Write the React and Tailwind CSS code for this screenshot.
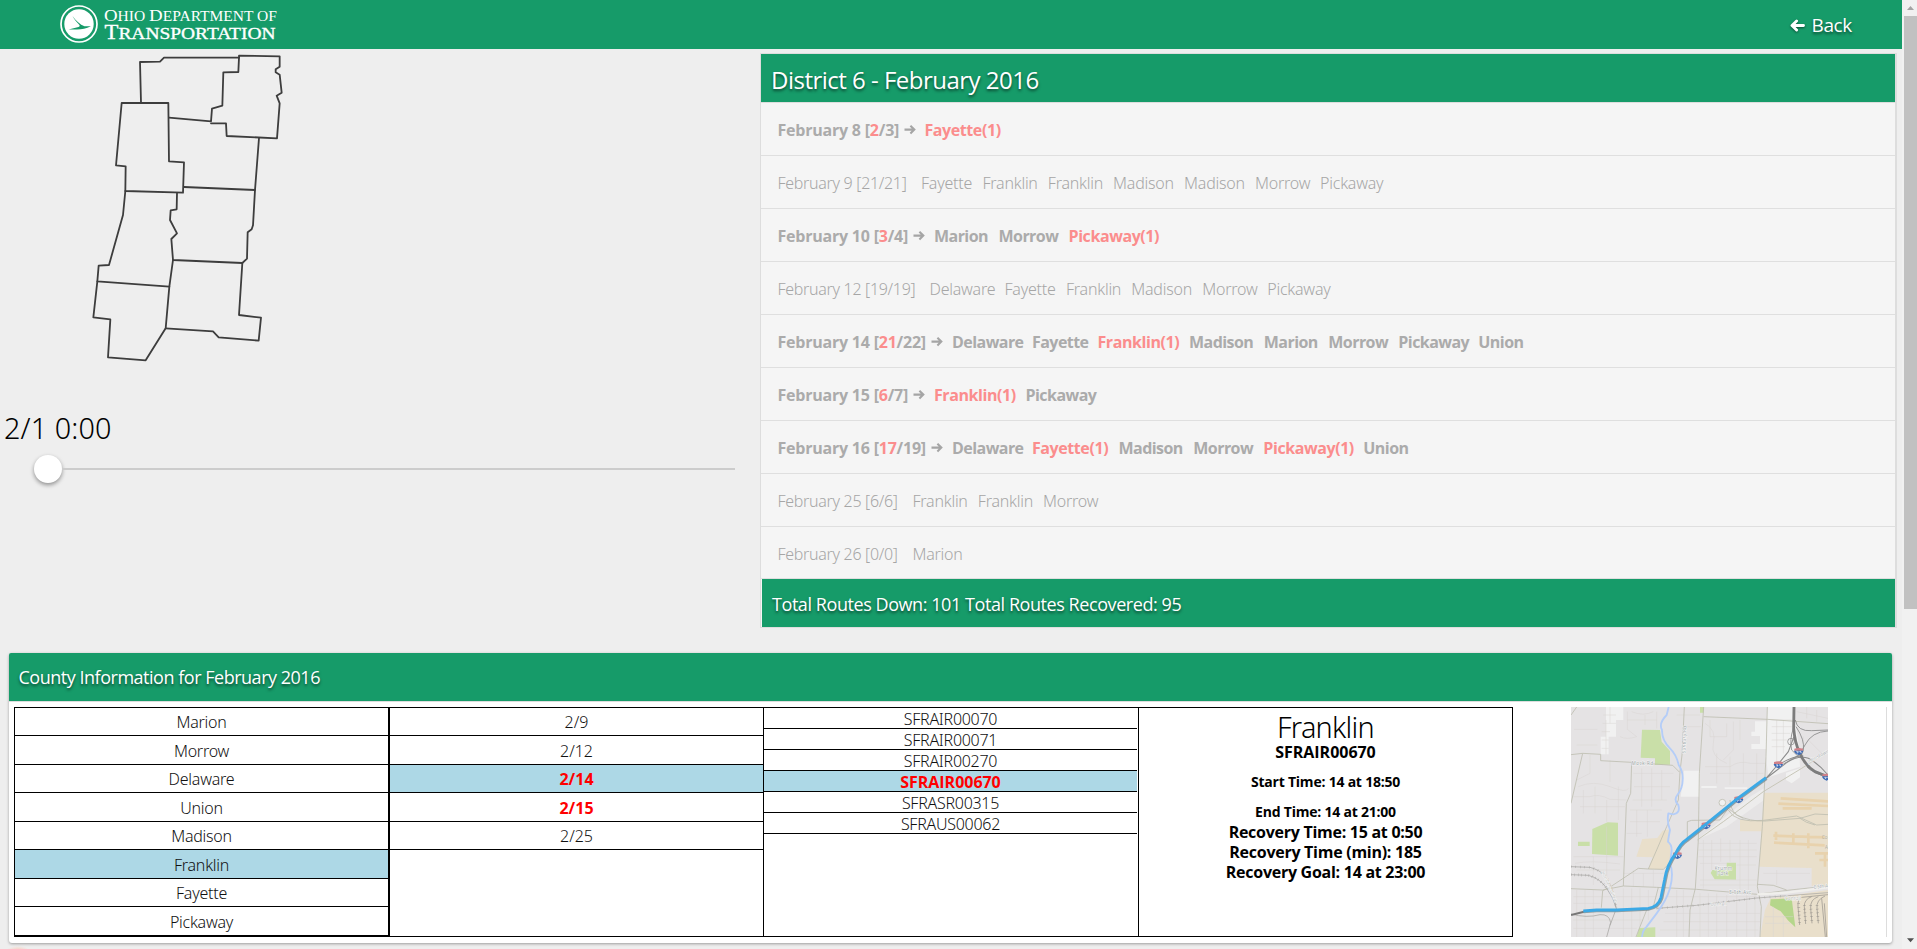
import React from 'react';

const days = [
  { label: 'February 8', down: '2', total: '3', alert: true, w: 'w-[147px]', names: ['Fayette(1)'] },
  { label: 'February 9', down: '21', total: '21', w: 'w-[143.5px]', names: ['Fayette', 'Franklin', 'Franklin', 'Madison', 'Madison', 'Morrow', 'Pickaway'] },
  { label: 'February 10', down: '3', total: '4', alert: true, w: 'w-[156.5px]', names: ['Marion', 'Morrow', 'Pickaway(1)'] },
  { label: 'February 12', down: '19', total: '19', w: 'w-[152px]', names: ['Delaware', 'Fayette', 'Franklin', 'Madison', 'Morrow', 'Pickaway'] },
  { label: 'February 14', down: '21', total: '22', alert: true, w: 'w-[174.5px]', names: ['Delaware', 'Fayette', 'Franklin(1)', 'Madison', 'Marion', 'Morrow', 'Pickaway', 'Union'] },
  { label: 'February 15', down: '6', total: '7', alert: true, w: 'w-[156.5px]', names: ['Franklin(1)', 'Pickaway'] },
  { label: 'February 16', down: '17', total: '19', alert: true, w: 'w-[174.5px]', names: ['Delaware', 'Fayette(1)', 'Madison', 'Morrow', 'Pickaway(1)', 'Union'] },
  { label: 'February 25', down: '6', total: '6', w: 'w-[135px]', names: ['Franklin', 'Franklin', 'Morrow'] },
  { label: 'February 26', down: '0', total: '0', w: 'w-[135px]', names: ['Marion'] },
];

const lightWidths = {
  Fayette: 'w-[61.5px]', Franklin: 'w-[65.3px]', Madison: 'w-[71px]', Morrow: 'w-[65px]',
  Delaware: 'w-[75px]', Pickaway: 'w-[75px]', Marion: 'w-[60px]',
};
const boldWidths = {
  Fayette: 'w-[65.5px]', 'Fayette(1)': 'w-[86.5px]', 'Franklin(1)': 'w-[91.5px]', Madison: 'w-[74.8px]',
  Morrow: 'w-[70px]', Delaware: 'w-[80px]', Pickaway: 'w-[80px]', Marion: 'w-[64.5px]',
  'Pickaway(1)': 'w-[100px]', Union: 'w-[60px]',
};

const counties = ['Marion', 'Morrow', 'Delaware', 'Union', 'Madison', 'Franklin', 'Fayette', 'Pickaway'];
const dates = ['2/9', '2/12', '2/14', '2/15', '2/25'];
const routes = ['SFRAIR00070', 'SFRAIR00071', 'SFRAIR00270', 'SFRAIR00670', 'SFRASR00315', 'SFRAUS00062'];

const Logo = () => (
  <svg className="ml-[60px] h-[49px] w-[220px]" viewBox="0 0 220 49" fill="none">
    <circle cx="19" cy="24" r="18" stroke="#fff" strokeWidth="1.7" />
    <circle cx="19" cy="24" r="14.7" fill="#fff" />
    <path d="M12.5 16 C16 21 20 24.5 24.5 26.3 L31 26.3 C26 28.5 22 29.6 17 29.6 L8.5 29.4 L18.5 27 C20 26.5 20 25.7 19 24.6 C16.5 22 14 19 12.5 16Z" fill="#169b69" />
    <g fill="#fff" fontFamily="'Liberation Serif', serif">
      <text x="44" y="21.3" fontSize="17" textLength="173" lengthAdjust="spacingAndGlyphs">O<tspan fontSize="14">HIO </tspan>D<tspan fontSize="14">EPARTMENT OF</tspan></text>
      <text x="44.5" y="39" fontSize="20.5" textLength="171" lengthAdjust="spacingAndGlyphs" stroke="#fff" strokeWidth="0.35">T<tspan fontSize="17.5">RANSPORTATION</tspan></text>
    </g>
  </svg>
);

const BackArrow = () => (
  <svg className="h-[13px] w-[15px] drop-shadow-[0_1px_1px_rgba(0,0,0,0.5)]" viewBox="0 0 15 13" fill="none" stroke="#fff" strokeWidth="2.9" strokeLinecap="round" strokeLinejoin="round">
    <path d="M13.5 6.5 H2.5 M6.6 2 L2 6.5 L6.6 11" />
  </svg>
);

const DistrictMap = () => (
  <svg className="ml-[80px] h-[321px] w-[220px] shrink-0" viewBox="0 27 660 963" fill="none" stroke="#3d3d3d" strokeWidth="5.4" strokeLinejoin="round" strokeLinecap="round">
    <path d="M183 188 L180 66 L240 65 L252 53 L477 53 L475 96 L430 97 L427 197 L396 206 L393 244 L267 233" />
    <path d="M477 53 V47 L599 49 V80 L587 88 V97 L599 104 L605 158 L590 167 L599 190 L591 295 L440 288 L438 250 H393" />
    <path d="M125 189 H265 L267 364 L312 367 L309 458 L136 453 L137 379 L108 376 Z" />
    <path d="M537 294 L525 450 L312 441" />
    <path d="M136 453 L129 525 L87 675 L56 677 L52 724 L268 740" />
    <path d="M291 460 L290 508 L272 511 L270 540 L291 580 L274 597 L279 660 L487 669 L501 656 L503 577 L515 568 L519 556 L525 450" />
    <path d="M52 724 L40 832 L91 838 L84 952 L197 961 L257 865 L268 740 L279 660" />
    <path d="M487 669 L477 825 L543 833 L536 902 L416 892 L399 874 L257 865" />
  </svg>
);

const Shield = ({ x, y }) => (
  <g>
    <path d={`M${x - 13} ${y - 8} Q${x} ${y - 12} ${x + 13} ${y - 8} V${y - 2} H${x - 13}Z`} fill="#d08088" />
    <path d={`M${x - 14} ${y - 2} H${x + 14} Q${x + 13} ${y + 6} ${x} ${y + 11} Q${x - 13} ${y + 6} ${x - 14} ${y - 2}Z`} fill="#3f6cb5" />
    <path d={`M${x - 7} ${y + 1} H${x - 1} L${x - 4} ${y + 6} M${x + 2} ${y + 1} H${x + 7} V${y + 5}`} stroke="#fff" strokeWidth="2.2" fill="none" />
  </g>
);

const RoadMap = () => (
  <svg className="h-[230px] w-[257px]" viewBox="183 201 771 690" fill="none">
    <rect x="183" y="201" width="771" height="690" fill="#e5e3e4" />
    <g fill="#f1f1f1">
      <path d="M288 201 H340 V240 H318 V290 H296 V343 H272 V290 H288Z" />
      <path d="M772 201 H850 L868 330 L870 380 L775 412 L768 350Z" />
      <path d="M735 244 H770 V327 H724 V312 H750 V288 H724 V275 H735Z" />
      <path d="M522 392 H568 V470 H512Z" />
      <path d="M574 438 H620 V444 H574Z M644 442 H712 V447 H644Z" />
      <path d="M828 398 L870 385 V412 L845 430 L828 420Z" />
      <path d="M720 470 L762 445 V480 L650 560 L560 600 L640 535Z" fillOpacity=".6" />
    </g>
    <g fill="#e9dfcb">
      <path d="M762 458 H954 V740 L905 738 V684 L748 680 L754 574 H690 V540 H757Z" />
      <path d="M782 775 L954 750 V891 H750 L765 810Z" />
      <path d="M458 572 L476 568 L484 670 L458 688 L415 687 L428 652 L379 650 L397 597 L442 594Z" />
    </g>
    <g fill="#c9dfa8">
      <path d="M396 269 L450 270 L455 305 L480 333 V374 L435 375 V355 L392 353Z" />
      <path d="M293 547 L324 548 V647 L246 642 L247 567Z" />
      <path d="M204 605 H239 V618 H204Z M570 201 H581 V218 H570Z" />
      <path d="M650 668 H678 V719 L614 718 L602 699 L607 690 L650 690Z" />
      <path d="M388 864 L436 862 V891 H380Z" />
      <path d="M782 778 L845 775 L856 862 L835 842 L812 814 L780 796Z" fill="#b5d68b" />
    </g>
    <g stroke="#d8d5d3" strokeWidth="1.5">
      <path d="M280 225 H318 M278 250 H318 M275 275 H300 M275 300 H296 M275 325 H296 M300 201 V250 M288 343 V240" />
      <path d="M352 215 V268 L380 290 M352 240 H440 M365 215 Q400 230 430 215 M405 225 V255 M440 215 V265 M330 290 Q350 300 380 290" />
      <path d="M192 268 H262 M200 315 H262 M240 345 V400 L200 420 M300 360 V425 M205 440 Q250 420 300 440 T355 445 M190 470 H240 Q265 460 300 478 L350 480 M220 450 V520 M255 440 V520 M210 500 H345 M290 480 V545 M325 440 V540" />
      <path d="M370 400 H490 M372 440 H480 M368 480 H470 M360 510 H455 M395 385 V500 M425 385 V500 M455 390 V480 M360 545 H450 M350 580 H395 M380 510 V590 M412 510 V590" />
      <path d="M500 225 H570 M525 260 H572 M585 250 Q620 270 610 310 T650 370 M600 240 V290 H650 V250 M670 245 V330 L640 360 M690 240 V300 M585 380 H660 Q690 360 720 370 H768 M600 400 H760 M620 340 V430 M660 350 V435 M700 340 V430 M740 340 V430" />
      <path d="M785 240 H845 M785 260 H845 M785 280 H840 M785 300 H830 M785 320 H825 M800 240 V370 M820 240 V340 M860 215 L954 235 M890 201 V235 M920 210 V245 M895 300 L940 345 M880 290 V340" />
      <path d="M190 650 H340 M195 670 Q240 660 330 672 M290 560 V735 M250 650 V735 M200 690 H330 M340 700 H460 M370 690 V740 M400 700 V740 M430 690 V740" />
      <path d="M565 610 H740 M565 630 H740 M565 650 H740 M570 670 H650 M680 675 H738 M580 600 V745 M605 600 V690 M632 595 V665 M660 600 V665 M690 600 V750 M715 600 V750 M570 720 H740 M570 735 H740" />
      <path d="M190 770 H440 M190 790 H270 M200 750 V891 M225 750 V891 M250 750 V891 M340 745 V891 M365 745 V891 M390 745 V860 M190 840 H400 M190 865 H380 M415 750 V840" />
      <path d="M470 770 H740 M465 820 H750 M460 845 H750 M450 870 H745 M500 750 V891 M520 750 V891 M570 760 V891 M595 760 V891 M620 760 V891 M650 765 V891 M680 765 V891 M710 760 V891 M735 760 V891" />
      <path d="M765 830 H850 M765 850 H840 M790 800 V891 M820 830 V891 M760 700 H900 M800 690 V735" />
    </g>
    <g stroke="#e8d2ad" strokeWidth="11">
      <path d="M812 475 L954 484 M805 491 L954 498 M818 505 H905" strokeWidth="8" />
      <path d="M790 587 L944 592 M792 608 L944 616 M915 640 H954 M928 660 H954 M798 575 V600 M850 580 V610 M895 580 V625 M945 640 V680" strokeWidth="8" />
    </g>
    <g stroke="#bdbcae" strokeWidth="2.4">
      <path d="M200 201 L183 225 M183 344 L218 340 L272 343 V362 L365 367 L488 376 L508 396 M218 340 L183 490" />
      <path d="M365 367 L362 460 L349 490 L340 738 M523 201 L516 345 L510 395 L505 480 L470 560 L440 630 L415 687 L385 685 L305 738 L278 752 L274 803" />
      <path d="M581 201 L568 400 L565 600 L556 745 L540 810 L537 891 M581 230 L772 238 L954 251 M772 201 L768 350 L757 560 L742 740 L754 800 L750 891" />
      <path d="M183 746 L278 750 L340 738 L440 742 L560 748 L742 763 L840 750 L954 738 M742 733 L790 736 L830 750 M445 742 L430 800 L410 810 L390 860 L378 891" />
      <path d="M415 687 L460 688 L500 650 M532 600 V545 L545 541 L630 540 L655 505 L680 525 Q720 545 765 543 L870 535 L915 522 L954 524 M655 510 Q675 550 760 541 L860 528 L920 555 L954 553 M870 535 Q885 548 915 555 M660 480 Q660 520 700 535" />
      <circle cx="637" cy="488" r="10" fill="#f1f1f1" />
      <path d="M562 600 L640 545 L760 455 L875 385 L954 335" stroke="#c7c6b8" strokeWidth="3" />
    </g>
    <path d="M742 763 L830 758 L954 742" stroke="#f0efec" strokeWidth="7" />
    <path d="M440 805 L560 796 L740 774 L820 768 L954 758" stroke="#aaa9a5" strokeWidth="2.2" />
    <path d="M440 805 L560 796 L740 774 L820 768" stroke="#aaa9a5" strokeWidth="7" strokeDasharray="1.5 14" />
    <g stroke="#a9a8a6" strokeWidth="2.4">
      <path d="M183 680 L240 682 Q270 690 285 708 Q310 740 318 803 M183 704 L235 706 Q270 715 290 745 Q312 775 318 803" />
      <path d="M183 822 Q230 835 270 824 Q298 822 302 848 L290 891 M320 803 L300 856" />
      <path d="M183 680 L240 682 Q270 690 285 708 Q310 740 318 803" strokeWidth="7" strokeDasharray="1.5 12" />
      <path d="M183 704 L235 706 Q270 715 290 745" strokeWidth="8" strokeDasharray="1.5 9" />
    </g>
    <g stroke="#94908a" strokeWidth="2">
      <path d="M954 764 L875 772 Q862 778 864 800 L869 855 M905 770 Q882 778 883 800 L887 852 M925 770 Q900 778 902 805 L906 850 M945 768 Q918 780 921 805 L925 850 M935 775 L946 891 M943 790 L950 891" />
      <path d="M866 790 L869 855 M883 795 L887 852 M902 795 L906 850 M921 795 L925 850" strokeWidth="8" strokeDasharray="1.5 10" />
    </g>
    <path d="M476 201 L470 225 Q445 250 456 270 Q455 300 480 325 Q500 345 506 375 Q520 395 518 420 Q518 445 502 465 Q490 480 505 495 Q512 520 490 523 L475 520 Q470 545 480 570 Q475 595 474 605 Q488 615 484 640 L480 670 Q492 700 480 745 Q470 780 440 820 L410 860 Q398 870 396 891" stroke="#b4cdf8" strokeWidth="5.5" strokeLinejoin="round" />
    <g stroke="#8b8b8b" strokeWidth="3.2">
      <path d="M768 415 L800 378 L835 335 L852 290 M770 414 L830 368 Q865 345 895 355 Q925 370 954 405 M800 378 Q850 345 880 348" />
      <path d="M856 240 Q862 275 905 272 L954 270 M954 273 Q905 275 885 315 L868 345 L820 372 M850 265 Q838 300 845 330 L865 350 M858 260 Q885 300 880 330 L872 352 M890 380 Q905 398 954 412" strokeWidth="2.6" />
      <circle cx="843" cy="305" r="10" strokeWidth="2.2" />
    </g>
    <path d="M852 201 L851 265 Q855 310 868 335 Q880 372 915 395 L954 410" stroke="#7c7c7c" strokeWidth="8.5" />
    <path d="M183 825 L222 815" stroke="#777" strokeWidth="6" />
    <path d="M220 816 L260 813 L320 813 L415 808 Q448 802 456 775 L467 720 Q474 675 500 642 Q515 612 532 602 L590 556 L680 482 L770 416" stroke="#7d8d91" strokeWidth="8" strokeOpacity=".8" />
    <Shield x={502} y={646} />
    <Shield x={588} y={557} />
    <Shield x={686} y={479} />
    <Shield x={805} y={374} />
    <Shield x={866} y={334} />
    <Shield x={950} y={411} />
    <path d="M220 813 L260 810 L320 810 L415 805 Q445 800 453 772 L464 718 Q471 673 497 640 Q512 609 529 599 L587 553 L677 480 L768 413" stroke="#3ca9e6" strokeWidth="8.5" strokeLinejoin="round" />
    <g fill="#5e6f72" stroke="#f3f3f3" strokeWidth="3" paintOrder="stroke" fontFamily="'Open Sans', sans-serif" fontSize="13.5">
      <text x="365" y="376" textLength="64">Mock-Rd</text>
      <text x="526" y="340" textLength="82" transform="rotate(-88 526 340)">Sunbury-Rd</text>
      <text x="614" y="690" textLength="52">Krumm</text>
      <text x="622" y="704" textLength="32">Park</text>
      <text x="658" y="763" textLength="66">E 5th-Ave</text>
      <text x="602" y="798" textLength="48" fill="#99a0a0" transform="rotate(-3 602 798)">Conrail</text>
      <text x="825" y="779" textLength="48" fill="#99a0a0">Conrail</text>
      <text x="912" y="746" textLength="42" transform="rotate(-6 912 746)">E 5th A</text>
      <text x="896" y="370" textLength="70" fill="#7d8789" transform="rotate(-29 896 370)">Johnstown</text>
      <text x="275" y="697" textLength="100" fill="#99a0a0" fontSize="11" transform="rotate(66 275 697)">Norfolk Southern</text>
      <text x="936" y="596" fill="#8d9696" stroke="none">Co</text>
      <text x="945" y="627" fill="#8d9696" stroke="none">A</text>
    </g>
  </svg>
);

const DayRow = ({ day, last }) => {
  const bold = day.alert;
  return (
    <li className={`flex h-[53px] shrink-0 items-center border-[#dfdfdf] pt-px pl-[16.5px] text-base leading-none whitespace-nowrap ${last ? 'border-b-0' : 'border-b'} ${bold ? 'font-bold text-[#ababab]' : "font-['Noto_Sans',sans-serif] font-light text-[#a6a6a6]"}`}>
      <span className={`flex shrink-0 items-center ${day.w} ${bold ? 'tracking-[-0.22px]' : 'tracking-[-0.31px]'}`}>
        <span>{day.label} [{bold ? <span className="text-[#fb8d8d]">{day.down}</span> : day.down}/{day.total}]</span>
        {bold && (
          <svg className="ml-[5px] h-[10px] w-[12px]" viewBox="0 0 12 10" fill="none" stroke="#a5a5a5" strokeWidth="2.1">
            <path d="M0.5 4.6 H10 M6.4 0.8 L10.3 4.6 L6.4 8.4" />
          </svg>
        )}
      </span>
      {day.names.map((name, i) => (
        <span key={i} className={`shrink-0 ${bold ? boldWidths[name] : lightWidths[name]} ${name.includes('(') ? 'tracking-[-0.42px] text-[#fb8d8d]' : bold ? 'tracking-[-0.55px]' : 'tracking-[-0.24px]'}`}>{name}</span>
      ))}
    </li>
  );
};

const Scrollbar = () => (
  <div className="flex w-[15px] shrink-0 flex-col items-end bg-[#f1f1f1]">
    <svg className="h-4 w-[13px] shrink-0" viewBox="0 0 13 16"><path d="M3 10 L6.5 6 L10 10Z" fill="#a3a3a3" /></svg>
    <div className="h-[593px] w-[13px] shrink-0 bg-[#c1c1c1]" />
    <svg className="mt-auto h-[17px] w-[13px] shrink-0" viewBox="0 0 13 17"><path d="M3 6.3 H10 L6.5 10.3Z" fill="#505050" /></svg>
  </div>
);

const shadowText = 'text-white [text-shadow:0_2px_3px_rgba(0,0,0,0.55)]';

export default function App() {
  return (
    <div className="flex h-[949px] w-[1917px] overflow-hidden bg-[#eeeeee] font-['Open_Sans',sans-serif] text-black">
      <div className="flex w-[1902px] shrink-0 flex-col">
        <header className="flex h-[49px] shrink-0 items-center justify-between bg-[#169b69] pr-[50px]">
          <Logo />
          <a className={`flex items-center gap-[6px] pt-px text-[19px] leading-none tracking-[-0.35px] ${shadowText}`}>
            <BackArrow />
            <span>Back</span>
          </a>
        </header>

        <main className="flex h-[604px] shrink-0">
          <section className="flex w-[760px] shrink-0 flex-col">
            <DistrictMap />
            <div className="mt-[38px] h-[40px] pl-[4px] font-['Noto_Sans',sans-serif] text-[28.8px] leading-[40px] font-light tracking-[0.1px]">2/1 0:00</div>
            <div className="mt-[7px] flex h-[28px] items-center pl-[34px]">
              <div className="size-[28px] shrink-0 rounded-full bg-white shadow-[0_2px_4px_rgba(0,0,0,0.4)]" />
              <div className="h-[2px] w-[673px] bg-[#cccccc]" />
            </div>
          </section>

          <section className="mt-[4px] flex h-[575px] w-[1137px] flex-col border-t border-r-2 border-b border-l border-[#dddddd] bg-[#f5f5f5]">
            <h1 className={`flex h-[49px] shrink-0 items-center border-b border-[#dddddd] bg-[#169b69] pt-[4px] pl-[10px] text-2xl leading-none font-normal tracking-[-0.51px] ${shadowText}`}>District 6 - February 2016</h1>
            <ul className="flex h-[476px] shrink-0 flex-col overflow-hidden border-b border-[#dfdfdf]">
              {days.map((day, i) => <DayRow key={day.label} day={day} last={i === days.length - 1} />)}
            </ul>
            <div className={`ml-px flex flex-1 items-center bg-[#169b69] pt-[2px] pl-[10px] text-lg leading-none tracking-[-0.43px] ${shadowText}`}>Total Routes Down: 101 Total Routes Recovered: 95</div>
          </section>
        </main>

        <section className="ml-[9px] h-[290px] w-[1883px] shrink-0 rounded-[3px] bg-white shadow-[0_1px_3px_rgba(0,0,0,0.35)]">
          <h2 className={`flex h-[49px] items-center rounded-t-[2px] border-b border-[#dddddd] bg-[#169b69] pl-[9.5px] text-lg leading-none font-normal tracking-[-0.48px] ${shadowText}`}>County Information for February 2016</h2>
          <div className="flex h-[235px] pt-[5px] pl-[5px] text-center font-['Noto_Sans',sans-serif] text-base leading-none font-light text-[#111111]">
            <div className="h-[230px] w-[375px] border border-black">
              {counties.map((name) => (
                <div key={name} className={`flex h-[28px] items-center justify-center border-b border-black pt-px tracking-[-0.24px] even:h-[29px] ${name === 'Franklin' ? 'bg-[#add8e6]' : ''}`}>{name}</div>
              ))}
            </div>
            <div className="h-[230px] w-[375px] border border-black">
              {dates.map((date) => (
                <div key={date} className={`flex h-[28px] items-center justify-center border-b border-black pt-px even:h-[29px] ${date === '2/14' ? 'bg-[#add8e6]' : ''} ${date === '2/14' || date === '2/15' ? "font-['Open_Sans',sans-serif] font-bold text-[#ff0000]" : ''}`}>{date}</div>
              ))}
            </div>
            <div className="h-[230px] w-[374px] border-y border-black pr-px">
              {routes.map((route) => (
                <div key={route} className={`flex h-[21px] items-center justify-center border-b border-black pt-px ${route === 'SFRAIR00670' ? "bg-[#add8e6] font-['Open_Sans',sans-serif] font-bold tracking-[-0.03px] text-[#ff0000]" : 'tracking-[-0.27px]'}`}>{route}</div>
              ))}
            </div>
            <div className="flex h-[230px] w-[375px] flex-col items-center border border-black pt-[4px] font-['Open_Sans',sans-serif] font-bold text-black">
              <div className="h-[30px] font-['Noto_Sans',sans-serif] text-[28.8px] leading-[30px] font-light tracking-[-0.72px]">Franklin</div>
              <div className="h-[20px] leading-[20px] tracking-[-0.03px]">SFRAIR00670</div>
              <div className="mt-[10px] h-[20px] text-sm leading-[20px] tracking-[-0.22px]">Start Time: 14 at 18:50</div>
              <div className="mt-[10px] h-[20px] text-sm leading-[20px] tracking-[-0.22px]">End Time: 14 at 21:00</div>
              <div className="h-[20px] leading-[20px] tracking-[-0.27px]">Recovery Time: 15 at 0:50</div>
              <div className="h-[20px] leading-[20px] tracking-[-0.27px]">Recovery Time (min): 185</div>
              <div className="h-[20px] leading-[20px] tracking-[-0.27px]">Recovery Goal: 14 at 23:00</div>
            </div>
            <div className="flex h-[230px] w-[374px] justify-center border-r border-[#dddddd]">
              <RoadMap />
            </div>
          </div>
        </section>
        <div className="mt-[2px] ml-[8px] h-[4px] w-[30px] bg-[radial-gradient(ellipse_11px_4px_at_10px_5px,#f6cfc0,transparent)]" />
      </div>
      <Scrollbar />
    </div>
  );
}
